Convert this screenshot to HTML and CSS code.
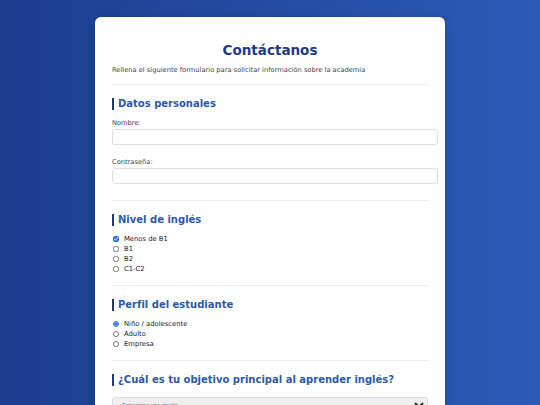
FILE: index.html
```html
<!DOCTYPE html>
<html lang="es">
<head>
<meta charset="utf-8">
<title>Contáctanos</title>
<link rel="stylesheet" href="styles.css">
</head>
<body>
<main class="card">
  <h1 class="title">Contáctanos</h1>
  <p class="subtitle">Rellena el siguiente formulario para solicitar información sobre la academia</p>
  <hr class="sep">
  <section class="group">
    <h2 class="group-title">Datos personales</h2>
    <label class="field-label" for="nombre">Nombre:</label>
    <input class="text-input" id="nombre" type="text">
    <label class="field-label second" for="pass">Contraseña:</label>
    <input class="text-input" id="pass" type="password">
  </section>
  <hr class="sep">
  <section class="group">
    <h2 class="group-title">Nivel de inglés</h2>
    <ul class="options">
      <li><label><input class="opt" type="checkbox" checked> Menos de B1</label></li>
      <li><label><input class="opt" type="checkbox"> B1</label></li>
      <li><label><input class="opt" type="checkbox"> B2</label></li>
      <li><label><input class="opt" type="checkbox"> C1-C2</label></li>
    </ul>
  </section>
  <hr class="sep">
  <section class="group">
    <h2 class="group-title">Perfil del estudiante</h2>
    <ul class="options">
      <li><label><input class="opt" type="radio" name="perfil" checked> Niño / adolescente</label></li>
      <li><label><input class="opt" type="radio" name="perfil"> Adulto</label></li>
      <li><label><input class="opt" type="radio" name="perfil"> Empresa</label></li>
    </ul>
  </section>
  <hr class="sep">
  <section class="group">
    <h2 class="group-title">¿Cuál es tu objetivo principal al aprender inglés?</h2>
    <select class="select">
      <option>-- Selecciona una opción --</option>
    </select>
  </section>
</main>
</body>
</html>
```
FILE: styles.css
```css
* { box-sizing: border-box; }
html, body { margin: 0; padding: 0; }
body {
  min-height: 405px;
  background: linear-gradient(90deg, #1d3d8e 0%, #244ca3 50%, #2c5bb7 100%);
  font-family: "DejaVu Sans", Verdana, sans-serif;
  color: #333;
  padding-top: 17px;
}
.card {
  width: 350px;
  margin: 0 auto;
  background: #fff;
  border-radius: 6px;
  padding: 23px 17px 20px 17px;
  box-shadow: 0 2px 8px rgba(0,0,0,0.2);
}
.title {
  margin: 0;
  text-align: center;
  font-size: 13.5px;
  line-height: 20px;
  color: #1f3b86;
  font-weight: bold;
}
.subtitle {
  margin: 5px 0 0;
  font-size: 6.7px;
  line-height: 10px;
  color: #444;
}
.sep {
  border: 0;
  border-top: 1px solid #eee;
  margin: 9px 0 0;
}
.group { padding-top: 13px; padding-bottom: 11px; }
.group + .sep { margin-top: 0; }
.group-title {
  margin: 0;
  font-size: 10px;
  line-height: 12px;
  color: #2d59a8;
  border-left: 2px solid #1e3a7c;
  padding-left: 4px;
}
.field-label {
  display: block;
  margin-top: 8px;
  font-size: 6.7px;
  line-height: 10px;
  color: #444;
}
.field-label.second { margin-top: 12px; }
.text-input {
  display: block;
  width: 326px;
  height: 16px;
  margin: 1px 0 5px;
  border: 1px solid #ddd;
  border-radius: 3px;
  background: #fff;
}
.options {
  list-style: none;
  margin: 8px 0 0;
  padding: 0;
  font-size: 6.8px;
  line-height: 10px;
  color: #222;
}
.options label { display: flex; align-items: center; gap: 5px; }
.opt {
  width: 6px;
  height: 6px;
  margin: 0 0 0 1px;
  accent-color: #2b6de0;
}
.select {
  display: block;
  width: 316px;
  height: 16px;
  margin-top: 11px;
  font-size: 5px;
  border: 1px solid #ddd;
  border-radius: 3px;
  background: #efefef;
  color: #333;
  font-family: "DejaVu Sans", Verdana, sans-serif;
}
```
